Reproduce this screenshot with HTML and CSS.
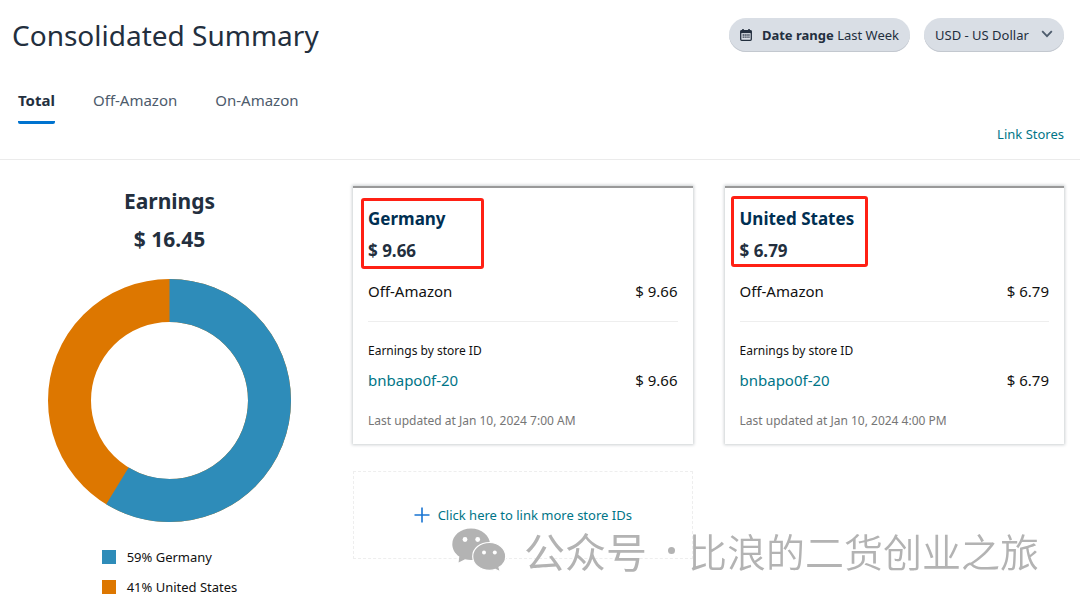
FILE: index.html
```html
<!DOCTYPE html>
<html lang="en">
<head>
  <meta charset="UTF-8">
  <meta name="viewport" content="width=device-width, initial-scale=1.0">
  <title>Consolidated Summary</title>
  <link rel="stylesheet" href="styles.css">
</head>
<body>
  <header class="page-header">
    <div class="title-row">
      <h1>Consolidated Summary</h1>
      <div class="filters">
        <button type="button" class="pill">
          <svg class="calendar" width="12" height="12" viewBox="0 0 12 12" aria-hidden="true">
            <path d="M3 0v2M9 0v2" stroke="#232f3e" stroke-width="1.6"/>
            <rect x="0.7" y="1.7" width="10.6" height="9.6" rx="1" fill="none" stroke="#232f3e" stroke-width="1.3"/>
            <path d="M0.5 1.5h11v2.6H0.5z" fill="#232f3e"/>
            <path d="M2.6 6h7M2.6 8.2h7" stroke="#232f3e" stroke-width="1.3" stroke-dasharray="1.3 0.6"/>
          </svg>
          <span><b>Date range</b> Last Week</span>
        </button>
        <div class="currency">
          <select class="pill" aria-label="Currency">
            <option>USD - US Dollar</option>
          </select>
          <svg class="chevron" width="12" height="8" viewBox="0 0 12 8" aria-hidden="true">
            <path d="M1.2 1.2L6 6.2L10.8 1.2" fill="none" stroke="#4d5b6c" stroke-width="1.8"/>
          </svg>
        </div>
      </div>
    </div>

    <nav class="tabs">
      <a href="#total" class="active">Total</a>
      <a href="#off-amazon">Off-Amazon</a>
      <a href="#on-amazon">On-Amazon</a>
    </nav>

    <div class="link-stores">
      <a href="#link-stores">Link Stores</a>
    </div>
  </header>

  <main class="content">
    <section class="earnings">
      <h2>Earnings</h2>
      <p class="total">$ 16.45</p>
      <svg class="donut" viewBox="0 0 243 243" role="img" aria-label="59% Germany, 41% United States">
        <g fill="none" stroke-width="43" transform="rotate(-90 121.5 121.5)">
          <circle cx="121.5" cy="121.5" r="100" stroke="#dd7700"/>
          <circle cx="121.5" cy="121.5" r="100" stroke="#2e8cb9" pathLength="1645" stroke-dasharray="966 679"/>
        </g>
      </svg>
      <ul class="legend">
        <li class="germany">59% Germany</li>
        <li class="us">41% United States</li>
      </ul>
    </section>

    <section class="stores">
      <article class="card">
        <div class="card-head">
          <h3>Germany</h3>
          <p>$ 9.66</p>
          <span class="highlight highlight-germany"></span>
        </div>
        <div class="row"><span>Off-Amazon</span><span>$ 9.66</span></div>
        <hr>
        <p class="label">Earnings by store ID</p>
        <div class="row store"><a href="#store-de">bnbapo0f-20</a><span>$ 9.66</span></div>
        <p class="updated">Last updated at Jan 10, 2024 7:00 AM</p>
      </article>

      <article class="card">
        <div class="card-head">
          <h3>United States</h3>
          <p>$ 6.79</p>
          <span class="highlight highlight-us"></span>
        </div>
        <div class="row"><span>Off-Amazon</span><span>$ 6.79</span></div>
        <hr>
        <p class="label">Earnings by store ID</p>
        <div class="row store"><a href="#store-us">bnbapo0f-20</a><span>$ 6.79</span></div>
        <p class="updated">Last updated at Jan 10, 2024 4:00 PM</p>
      </article>

      <a href="#link-more" class="add-store">
        <svg width="16" height="16" viewBox="0 0 16 16" aria-hidden="true">
          <path d="M8 0.5v15M0.5 8h15" stroke="#1874d2" stroke-width="1.6"/>
        </svg>
        Click here to link more store IDs
      </a>
    </section>
  </main>

  <div class="watermark" lang="zh-CN">
    <svg width="54" height="44" viewBox="0 0 54 44" aria-hidden="true">
      <path d="M19 0.5C8.5 0.5 0.3 7.5 0.3 16.3C0.3 21.3 3 25.7 7.3 28.6L6.6 34.6L13 31.2C15 31.8 17 32 19 32C29.5 32 38 25 38 16.3S29.5 0.5 19 0.5Z" fill="#b3b3b3"/>
      <path d="M37.5 14.5C28 14.5 20.7 20.7 20.7 28.4S28 42.3 37.5 42.3C39.6 42.3 41.6 42 43.4 41.4L48.3 43.7L47 39.3C51.2 36.8 53.7 32.8 53.7 28.4C53.7 20.7 46.5 14.5 37.5 14.5Z" fill="#b3b3b3" stroke="#fff" stroke-width="1.2"/>
      <g fill="#fff">
        <circle cx="13" cy="11.5" r="2.4"/>
        <circle cx="25.7" cy="11.5" r="2.4"/>
        <circle cx="32" cy="24.5" r="2"/>
        <circle cx="42.8" cy="24.5" r="2"/>
      </g>
    </svg>
    <span class="account">公众号</span>
    <span class="dot"></span>
    <span class="name">比浪的二货创业之旅</span>
  </div>
</body>
</html>
```
FILE: styles.css
```css
* {
  box-sizing: border-box;
}
body {
  margin: 0;
  font-family: "Noto Sans", "Open Sans", sans-serif;
  font-size: 15px;
  line-height: 24px;
  color: #111;
  background: #fff;
}
h1, h2, h3, p, ul {
  margin: 0;
  padding: 0;
}
a {
  color: #007587;
  text-decoration: none;
}

/* header */
.page-header {
  padding: 15px 16px 15px 12px;
  border-bottom: 1px solid #ebebeb;
}
.title-row {
  display: flex;
  justify-content: space-between;
  align-items: center;
}
h1 {
  font-size: 28px;
  line-height: 40px;
  font-weight: 400;
  color: #232f3e;
}
.filters {
  display: flex;
  gap: 14px;
}
.pill {
  display: flex;
  align-items: center;
  gap: 10px;
  height: 34px;
  padding: 0 11px;
  border: none;
  border-radius: 17px;
  background: #d9dee5;
  box-shadow: inset 0 -1px 0 #c3c8cf;
  font-family: inherit;
  font-size: 13px;
  color: #232f3e;
  cursor: pointer;
}
.currency {
  position: relative;
}
select.pill {
  appearance: none;
  width: 140px;
}
.chevron {
  position: absolute;
  right: 11px;
  top: 12px;
  pointer-events: none;
}
.tabs {
  display: flex;
  gap: 38px;
  margin-top: 33px;
  padding-left: 6px;
}
.tabs a {
  padding-bottom: 9px;
  border-bottom: 3px solid transparent;
  border-radius: 2px;
  color: #4d5b6c;
}
.tabs .active {
  border-bottom-color: #0073cf;
  font-weight: 700;
  color: #232f3e;
}
.link-stores {
  font-size: 13px;
  line-height: 20px;
  text-align: right;
}

/* earnings chart */
.content {
  display: grid;
  grid-template-columns: 305px 1fr;
  gap: 31px;
  padding: 26px 16px 12px 17px;
}
.earnings {
  display: flex;
  flex-direction: column;
  align-items: center;
  color: #232f3e;
}
h2, .total {
  font-size: 21px;
  line-height: 30px;
  font-weight: 700;
}
.total {
  margin-top: 8px;
}
.donut {
  width: 243px;
  margin-top: 25px;
}
.legend {
  display: grid;
  gap: 10px;
  margin-top: 25px;
  list-style: none;
  font-size: 13px;
  line-height: 20px;
  color: #111;
}
.legend li {
  display: flex;
  align-items: center;
  gap: 11px;
}
.legend li::before {
  content: "";
  width: 14px;
  height: 14px;
}
.germany::before {
  background: #2e8cb9;
}
.us::before {
  background: #dd7700;
}

/* store cards */
.stores {
  display: grid;
  grid-template-columns: 1fr 1fr;
  gap: 27px 32px;
  align-content: start;
}
.card {
  padding: 17px 15px 13px;
  border-top: 2px solid #999;
  box-shadow: 0 0 3px 1px #ccd0d2;
}
.card-head {
  position: relative;
  font-size: 17px;
  line-height: 28px;
  font-weight: 700;
  color: #232f3e;
}
h3 {
  margin-bottom: 4px;
  font-size: 17px;
  color: #002f52;
}
.highlight {
  position: absolute;
  border: 3px solid #ff2014;
  border-radius: 3px;
}
.highlight-germany {
  left: -7px;
  top: -7px;
  width: 123px;
  height: 71px;
}
.highlight-us {
  left: -9px;
  top: -9px;
  width: 137px;
  height: 71px;
}
.row {
  display: flex;
  justify-content: space-between;
  margin-top: 14px;
}
.store {
  margin-top: 7px;
}
hr {
  margin: 18px 0 19px;
  border: none;
  border-top: 1px solid #eee;
}
.label, .updated {
  font-size: 12px;
  line-height: 20px;
}
.updated {
  margin-top: 19px;
  color: #767676;
}
.add-store {
  display: flex;
  justify-content: center;
  align-items: center;
  gap: 8px;
  height: 88px;
  border: 1px dashed #eee;
  font-size: 13px;
}

/* watermark over the page */
.watermark {
  position: fixed;
  right: 41px;
  bottom: 38px;
  display: flex;
  align-items: center;
  font-family: "Noto Sans CJK SC", sans-serif;
  line-height: 44px;
  color: #b3b3b3;
  white-space: nowrap;
  pointer-events: none;
}
.account {
  margin-left: 18px;
  font-size: 41px;
}
.dot {
  width: 7px;
  height: 7px;
  margin: 0 13px 0 21px;
  border-radius: 50%;
  background: #b3b3b3;
}
.name {
  font-size: 39px;
  font-weight: 350;
}
```
